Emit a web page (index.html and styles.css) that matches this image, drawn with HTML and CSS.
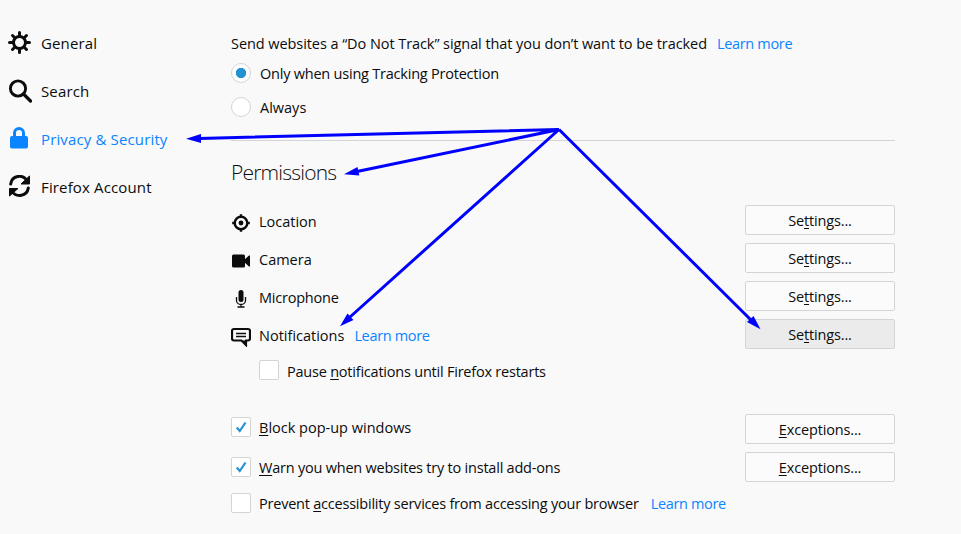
FILE: index.html
```html
<!DOCTYPE html>
<html lang="en">
<head>
    <meta charset="UTF-8">
    <title>Options</title>
    <link rel="stylesheet" href="styles.css">
</head>
<body>
<ul class="nav">
    <li>
        <svg width="24" height="24" viewBox="0 0 24 24">
            <circle cx="11.500" cy="11.500" r="6" fill="none" stroke="#0c0c0d" stroke-width="3"/>
            <path d="M11.500 1.500v3.500M11.500 18v3.500M1.500 11.500h3.500M18 11.500h3.500M4.500 4.500l2.500 2.500M16 16l2.500 2.500M18.500 4.500l-2.500 2.500M7 16l-2.500 2.500" stroke="#0c0c0d" stroke-width="3" stroke-linecap="round"/>
        </svg>
        <span>General</span>
    </li>
    <li>
        <svg width="24" height="24" viewBox="0 0 24 24">
            <circle cx="10" cy="9.500" r="7.600" fill="none" stroke="#0c0c0d" stroke-width="2.900"/>
            <path d="M15.500 15l7 7" stroke="#0c0c0d" stroke-width="3.200" stroke-linecap="round"/>
        </svg>
        <span>Search</span>
    </li>
    <li class="current">
        <svg width="24" height="24" viewBox="0 0 24 24">
            <path d="M6.500 11V6a4.500 4.500 0 0 1 9 0v5" fill="none" stroke="#0a84ff" stroke-width="3"/>
            <rect x="2" y="9" width="18" height="12.500" rx="2" fill="#0a84ff"/>
        </svg>
        <span>Privacy &amp; Security</span>
    </li>
    <li>
        <svg width="24" height="24" viewBox="0 0 24 24">
            <path d="M2.700 9C4 .200 14.500-1 19 5.500M20.300 13C19 21.500 8.500 22.800 4 16.500" fill="none" stroke="#0c0c0d" stroke-width="3" stroke-linecap="round"/>
            <path d="M21.500 1v8h-8.500zM1.500 21v-7.500h8.500z" fill="#0c0c0d" stroke="#0c0c0d" stroke-linejoin="round"/>
        </svg>
        <span>Firefox Account</span>
    </li>
</ul>

<div class="main">
    <div class="dnt">
        <span>Send websites a “Do Not Track” signal that you don’t want to be tracked</span>
        <a class="link">Learn more</a>
    </div>
    <div class="row radio-row"><i class="radio checked"></i><span class="tight">Only when using Tracking Protection</span></div>
    <div class="row radio-row"><i class="radio"></i><span>Always</span></div>

    <h2>Permissions</h2>
    <div class="row permission">
        <svg class="icon" width="20" height="20" viewBox="0 0 20 20">
            <circle cx="10" cy="10" r="6.300" fill="none" stroke="#0c0c0d" stroke-width="2.400"/>
            <circle cx="10" cy="10" r="2.400" fill="#0c0c0d"/>
            <path d="M10 1.200v3M10 15.800v3M1.200 10h3M15.800 10h3" stroke="#0c0c0d" stroke-width="2.400"/>
        </svg>
        <span>Location</span>
        <button>Se<u>t</u>tings...</button>
    </div>
    <div class="row permission">
        <svg class="icon" width="20" height="20" viewBox="0 0 20 20">
            <rect x="1" y="3.500" width="13" height="13" rx="1.500" fill="#0c0c0d"/>
            <path d="M13 9l5-4.500h1v11h-1l-5-4.500z" fill="#0c0c0d"/>
        </svg>
        <span>Camera</span>
        <button>Se<u>t</u>tings...</button>
    </div>
    <div class="row permission">
        <svg class="icon" width="20" height="20" viewBox="0 0 20 20">
            <rect x="7.500" y="1" width="5" height="12" rx="2.500" fill="#0c0c0d"/>
            <path d="M5.500 8v3.500a4.500 4 0 0 0 9 0V8M10 15.500v2M6.500 18h7" fill="none" stroke="#0c0c0d" stroke-width="1.300"/>
        </svg>
        <span class="tight">Microphone</span>
        <button>Se<u>t</u>tings...</button>
    </div>
    <div class="row permission">
        <svg class="icon" width="20" height="20" viewBox="0 0 20 20">
            <path d="M3 2h14a2 2 0 0 1 2 2v7.500a2 2 0 0 1-2 2h-2V18l-4.500-4.500H3a2 2 0 0 1-2-2V4a2 2 0 0 1 2-2z" fill="none" stroke="#0c0c0d" stroke-width="2.200"/>
            <path d="M11 13.500h4V19z" fill="#0c0c0d"/>
            <path d="M5 6.500h10M5 9.500h10" stroke="#0c0c0d" stroke-width="1.300"/>
        </svg>
        <span>Notifications</span>
        <a class="link">Learn more</a>
        <button class="hover">Se<u>t</u>tings...</button>
    </div>
    <div class="row permission sub"><i class="box"></i><span class="tight">Pause <u>n</u>otifications until Firefox restarts</span></div>

    <div class="row popup">
        <i class="box"><svg width="18" height="18" viewBox="0 0 18 18"><path d="M4.800 9.500l3 3.500 5.700-8.500" fill="none" stroke="#2292d0" stroke-width="2.200"/></svg></i>
        <span><u>B</u>lock pop-up windows</span>
        <button><u>E</u>xceptions...</button>
    </div>
    <div class="row">
        <i class="box"><svg width="18" height="18" viewBox="0 0 18 18"><path d="M4.800 9.500l3 3.500 5.700-8.500" fill="none" stroke="#2292d0" stroke-width="2.200"/></svg></i>
        <span class="tight"><u>W</u>arn you when websites try to install add-ons</span>
        <button><u>E</u>xceptions...</button>
    </div>
    <div class="row last">
        <i class="box"></i>
        <span class="tight">Prevent <u>a</u>ccessibility services from accessing your browser</span>
        <a class="link">Learn more</a>
    </div>
</div>

<svg class="arrows" width="961" height="534" viewBox="0 0 961 534">
    <g stroke="#00f" stroke-width="3" fill="#00f">
        <path d="M559 129.500L199 138.400M559 129.500L357 171.500M559 129.500L350 317M559 129.500L751 320"/>
        <g stroke="none">
            <path d="M186 138.700l15-4.700v9z"/>
            <path d="M344 174.300l13.500-7.300 1.800 8.600z"/>
            <path d="M340 326.300l7.500-12.800 6 6.500z"/>
            <path d="M760.500 329.300l-13.500-7.300 6.500-6z"/>
        </g>
    </g>
</svg>
</body>
</html>
```

FILE: styles.css
```css
* {
    margin: 0;
    padding: 0;
    list-style: none;
    box-sizing: border-box;
}

body {
    width: 961px;
    height: 534px;
    overflow: hidden;
    display: flex;
    background-color: #f9f9f9;
    color: #0c0c0d;
    font: 14.5px/20px "Open Sans", "Noto Sans", sans-serif;
    white-space: nowrap;
}

.nav {
    width: 231px;
    padding: 19px 0 0 8px;
    font-size: 15px;
    letter-spacing: 0.14px;
}

.nav li {
    height: 48px;
    display: flex;
    align-items: center;
    gap: 9px;
}

.nav .current {
    color: #0a84ff;
}

.main {
    width: 664px;
    padding-top: 34px;
}

.dnt {
    height: 22px;
    display: flex;
    letter-spacing: -0.07px;
}

.link {
    color: #0a84ff;
    margin-left: 10px;
    letter-spacing: -0.33px;
}

.row {
    height: 38px;
    display: flex;
    align-items: center;
}

.row span,
.row .link {
    padding-top: 2px;
}

.row .tight {
    letter-spacing: -0.22px;
}

.radio-row {
    height: 34px;
}

.radio,
.box {
    width: 20px;
    height: 20px;
    margin-right: 8px;
    border: 1px solid #d4d4d7;
    background-color: #fff;
}

.box {
    border-radius: 2px;
}

.box svg {
    display: block;
}

.radio {
    margin-right: 9px;
    border-radius: 50%;
}

.radio.checked {
    background: radial-gradient(circle, #2292d0 4.8px, #fff 5.5px);
}

h2 {
    height: 61px;
    margin-top: 16px;
    border-top: 1px solid #d4d4d7;
    font-size: 21px;
    font-weight: 300;
    line-height: 62px;
    letter-spacing: -0.8px;
}

.permission span,
.permission .link {
    padding-top: 4px;
}

.icon {
    margin: 5px 8px 0 0;
}

button {
    width: 150px;
    height: 30px;
    margin-left: auto;
    padding-top: 2px;
    border: 1px solid #d4d4d7;
    border-radius: 2px;
    background-color: #fbfbfb;
    color: #0c0c0d;
    font: inherit;
    letter-spacing: -0.15px;
}

button.hover {
    background-color: #ebebeb;
}

u {
    text-underline-offset: 2px;
    text-decoration-thickness: 1px;
}

.sub {
    height: 34px;
    padding-left: 28px;
}

.popup {
    margin-top: 23px;
}

.popup .box {
    margin-top: -4px;
}

.popup span {
    padding: 0 0 2px;
}

.last {
    height: 34px;
}

.last .link {
    margin-left: 12px;
}

.arrows {
    position: absolute;
    left: 0;
    top: 0;
}
```
